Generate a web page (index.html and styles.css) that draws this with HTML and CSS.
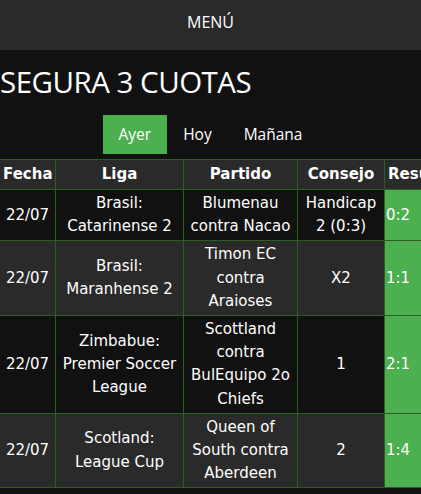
FILE: index.html
```html
<!DOCTYPE html>
<html lang="es">
<head>
<meta charset="utf-8">
<title>Segura 3 cuotas</title>
<link rel="stylesheet" href="styles.css">
</head>
<body>
<header class="menu">MENÚ</header>
<h1 class="title">SEGURA 3 CUOTAS</h1>
<nav class="tabs">
  <a class="tab active">Ayer</a>
  <a class="tab">Hoy</a>
  <a class="tab">Mañana</a>
</nav>
<div class="table-wrap">
<table class="tips">
  <colgroup>
    <col class="c-fecha"><col class="c-liga"><col class="c-partido"><col class="c-consejo"><col class="c-res">
  </colgroup>
  <thead>
    <tr><th>Fecha</th><th>Liga</th><th>Partido</th><th>Consejo</th><th class="res-h">Resultado</th></tr>
  </thead>
  <tbody>
    <tr><td>22/07</td><td>Brasil: Catarinense 2</td><td>Blumenau contra Nacao</td><td>Handicap 2 (0:3)</td><td class="res">0:2</td></tr>
    <tr><td>22/07</td><td>Brasil: Maranhense 2</td><td>Timon EC contra Araioses</td><td>X2</td><td class="res">1:1</td></tr>
    <tr><td>22/07</td><td>Zimbabue: Premier Soccer League</td><td>Scottland contra BulEquipo 2o Chiefs</td><td>1</td><td class="res">2:1</td></tr>
    <tr><td>22/07</td><td>Scotland: League Cup</td><td>Queen of South contra Aberdeen</td><td>2</td><td class="res">1:4</td></tr>
  </tbody>
</table>
</div>
</body>
</html>
```
FILE: styles.css
```css
html, body {
  margin: 0;
  padding: 0;
  background: #111111;
  color: #ffffff;
  overflow: hidden;
}

.menu {
  box-sizing: border-box;
  height: 50px;
  padding-top: 11px;
  background: #2a2a2a;
  font-family: "Open Sans", sans-serif;
  font-size: 16px;
  line-height: 22px;
  text-align: center;
}

.title {
  margin: 12px 0 0 0;
  font-family: "Open Sans", sans-serif;
  font-weight: 400;
  font-size: 29.5px;
  line-height: 40px;
  letter-spacing: -0.5px;
}

.tabs {
  display: flex;
  justify-content: center;
  margin-top: 13px;
  margin-bottom: 5px;
  font-family: "Open Sans", sans-serif;
  font-size: 15.5px;
  line-height: 23px;
}

.tab {
  padding: 8px 16px;
  color: #ffffff;
}

.tab.active {
  background: #4caf50;
}

.table-wrap {
  width: 100%;
  overflow: hidden;
}

.tips {
  table-layout: fixed;
  border-collapse: collapse;
  width: 474px;
  margin-left: -1px;
  font-family: "DejaVu Sans", sans-serif;
  font-size: 15px;
  line-height: 23.2px;
  text-align: center;
}

.c-fecha { width: 56px; }
.c-liga { width: 128px; }
.c-partido { width: 114px; }
.c-consejo { width: 87px; }
.c-res { width: 89px; }

.tips th,
.tips td {
  border: 1px solid #2b5e20;
  padding: 2px 3px;
}

.tips th {
  padding: 3px 3px;
  line-height: 23px;
  background: #2a2a2a;
  font-weight: bold;
}

.tips tbody tr:nth-child(odd) td { background: #111111; }
.tips tbody tr:nth-child(even) td { background: #2a2a2a; }

.tips th.res-h,
.tips td.res {
  text-align: left;
  padding-left: 1px;
}

.tips th.res-h {
  padding-left: 3px;
}

.tips tbody tr td.res {
  background: #4caf50;
}
```
